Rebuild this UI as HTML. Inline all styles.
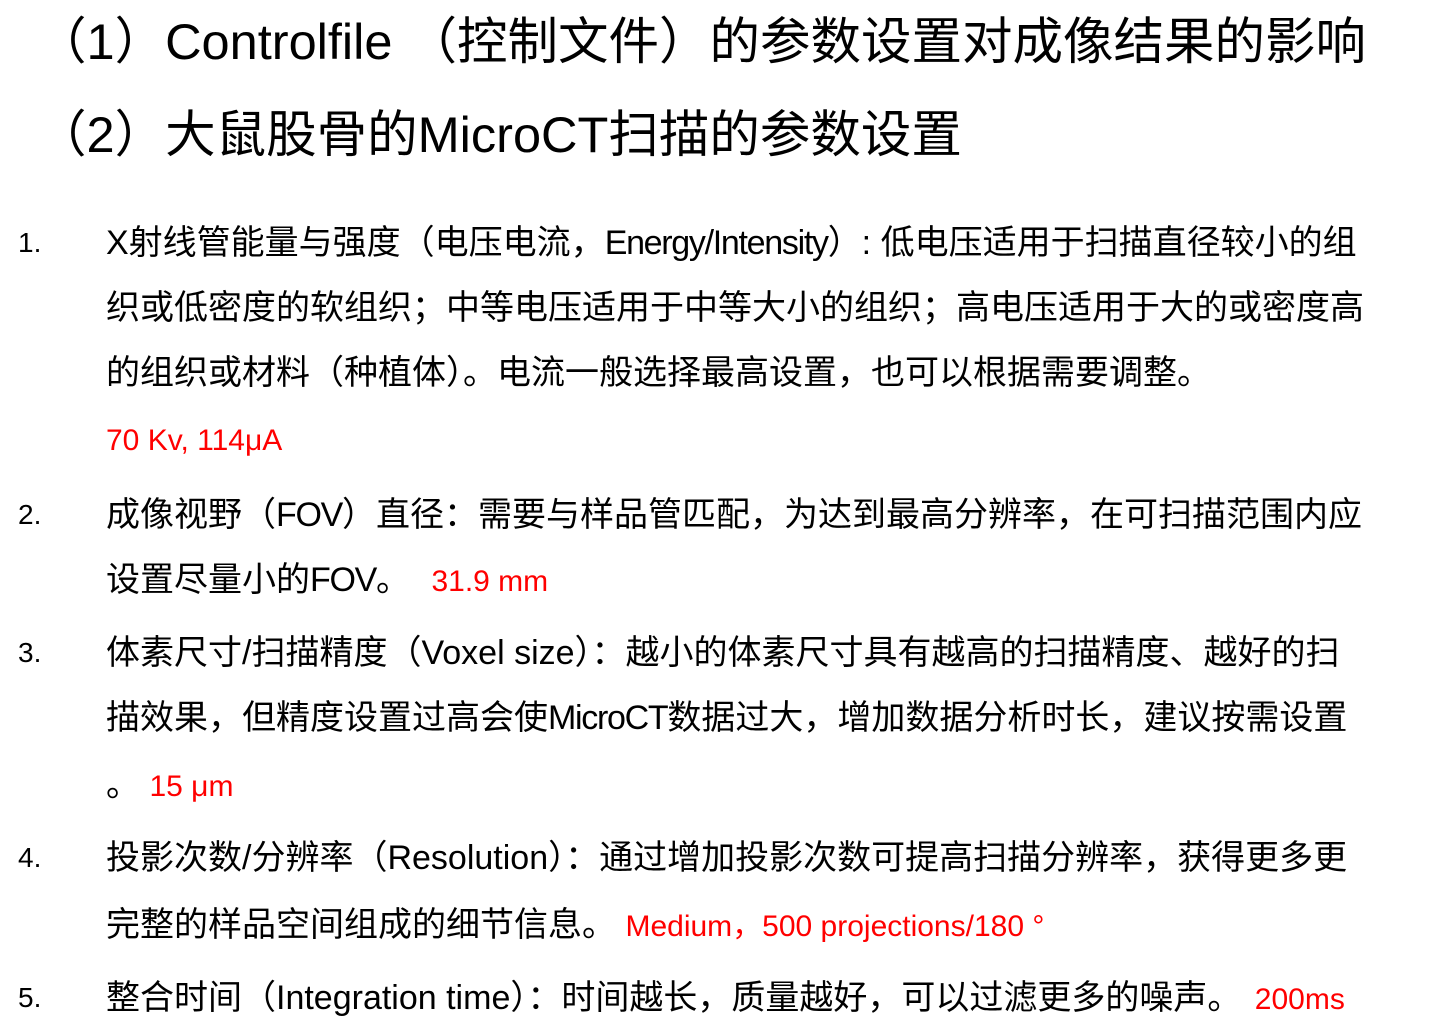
<!DOCTYPE html>
<html><head><meta charset="utf-8"><style>
html,body{margin:0;padding:0;background:#fff;width:1436px;height:1032px;overflow:hidden;position:relative}
.t{position:absolute;white-space:nowrap;font-family:"Liberation Sans","Noto Sans CJK SC",sans-serif;color:#000}
.h{font-size:50.5px;line-height:60px;left:36px}
.b{font-size:34px;line-height:40px;left:106px}
.n{font-size:28px;line-height:40px;left:18px}
.r{color:#f00}
.l{letter-spacing:-1.3px}
</style></head><body>
<div class="t h" style="top:12px">（1）Controlfile （控制文件）的参数设置对成像结果的影响</div>
<div class="t h" style="top:105px">（2）大鼠股骨的MicroCT扫描的参数设置</div>

<div class="t n" style="top:223px">1.</div>
<div class="t b" style="top:223px">X射线管能量与强度（电压电流，<span class="l">Energy/Intensity</span>）: 低电压适用于扫描直径较小的组</div>
<div class="t b" style="top:288px">织或低密度的软组织；中等电压适用于中等大小的组织；高电压适用于大的或密度高</div>
<div class="t b" style="top:353px">的组织或材料（种植体）。电流一般选择最高设置，也可以根据需要调整。</div>
<div class="t b r" style="top:421px;font-size:30px">70 Kv, 114μA</div>

<div class="t n" style="top:495px">2.</div>
<div class="t b" style="top:495px">成像视野（<span class="l">FOV</span>）直径：需要与样品管匹配，为达到最高分辨率，在可扫描范围内应</div>
<div class="t b" style="top:560px">设置尽量小的<span class="l">FOV</span>。 <span class="r" style="margin-left:12px;font-size:30px">31.9 mm</span></div>

<div class="t n" style="top:633px">3.</div>
<div class="t b" style="top:633px">体素尺寸/扫描精度（Voxel size）：越小的体素尺寸具有越高的扫描精度、越好的扫</div>
<div class="t b" style="top:698px">描效果，但精度设置过高会使<span class="l">MicroCT</span>数据过大，增加数据分析时长，建议按需设置</div>
<div class="t b" style="top:765px">。 <span class="r" style="font-size:30px">15 μm</span></div>

<div class="t n" style="top:838px">4.</div>
<div class="t b" style="top:838px">投影次数/分辨率（Resolution）：通过增加投影次数可提高扫描分辨率，获得更多更</div>
<div class="t b" style="top:905px">完整的样品空间组成的细节信息。 <span class="r" style="font-size:30px">Medium，500 projections/180 °</span></div>

<div class="t n" style="top:978px">5.</div>
<div class="t b" style="top:978px">整合时间（Integration time）：时间越长，质量越好，可以过滤更多的噪声。 <span class="r" style="margin-left:4px;font-size:30px">200ms</span></div>
</body></html>
